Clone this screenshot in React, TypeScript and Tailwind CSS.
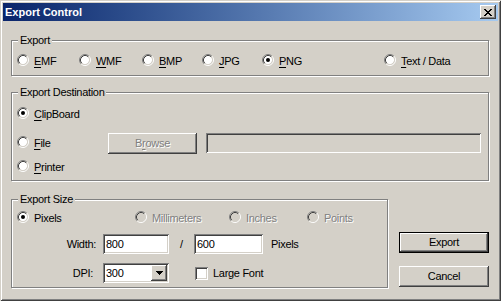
import clsx from 'clsx';
import type { ReactNode } from 'react';

const raised = 'shadow-[inset_-1px_-1px_0_#404040,inset_1px_1px_0_#fff,inset_-2px_-2px_0_#808080]';
const sunken =
  'shadow-[inset_1px_1px_0_#808080,inset_-1px_-1px_0_#fff,inset_2px_2px_0_#404040,inset_-2px_-2px_0_#d4d0c8]';
const grayText = 'text-[#808080] [text-shadow:1px_1px_0_#fff]';

function Key({ children }: { children: ReactNode }) {
  return <span className="underline underline-offset-[2px]">{children}</span>;
}

function Radio({ checked, disabled }: { checked?: boolean; disabled?: boolean }) {
  return (
    <svg width="12" height="12" viewBox="0 0 12 12" className="block shrink-0">
      <circle cx="6" cy="6" r="4.2" fill={disabled ? '#d4d0c8' : '#fff'} />
      <path d="M2.11 9.89A5.5 5.5 0 0 1 9.89 2.11" stroke="#808080" fill="none" />
      <path d="M9.89 2.11A5.5 5.5 0 0 1 2.11 9.89" stroke="#fff" fill="none" />
      <path d="M2.82 9.18A4.5 4.5 0 0 1 9.18 2.82" stroke="#404040" fill="none" />
      <path d="M9.18 2.82A4.5 4.5 0 0 1 2.82 9.18" stroke="#d4d0c8" fill="none" />
      {checked && <circle cx="6" cy="6" r="2" fill="#000" />}
    </svg>
  );
}

function RadioItem({
  label,
  checked,
  disabled,
  className,
}: {
  label: ReactNode;
  checked?: boolean;
  disabled?: boolean;
  className?: string;
}) {
  return (
    <div className={clsx('flex items-start', className)}>
      <Radio checked={checked} disabled={disabled} />
      <span className={clsx('ml-[5px] mt-[1px] whitespace-nowrap', disabled && grayText)}>{label}</span>
    </div>
  );
}

function Group({ title, className, children }: { title: string; className: string; children: ReactNode }) {
  return (
    <div
      className={clsx(
        'relative border border-[#808080] shadow-[inset_1px_1px_0_#fff,1px_1px_0_#fff]',
        className,
      )}
    >
      {/* caption sits over the etched line */}
      <span className="absolute left-[6px] top-[-7px] bg-[#d4d0c8] px-[2px] whitespace-nowrap">{title}</span>
      {children}
    </div>
  );
}

export default function App() {
  return (
    <div
      className={clsx(
        "flex h-[301px] w-[501px] flex-col bg-[#d4d0c8] p-[3px] font-['Liberation_Sans',Arial,sans-serif] text-[11px] leading-[13px] tracking-[-0.3px] text-black",
        'shadow-[inset_1px_1px_0_#d4d0c8,inset_-1px_-1px_0_#404040,inset_2px_2px_0_#fff,inset_-2px_-2px_0_#808080]',
      )}
    >
      {/* Title bar */}
      <div className="flex h-[18px] shrink-0 items-center justify-between bg-gradient-to-r from-[#0a246a] to-[#a6caf0] pl-[2px] pr-[2px]">
        <span className="font-bold tracking-normal text-white">Export Control</span>
        <button className={clsx('flex h-[14px] w-[16px] items-center justify-center bg-[#d4d0c8]', raised)}>
          <svg width="8" height="7" viewBox="0 0 8 7" shapeRendering="crispEdges" className="block">
            <path
              d="M0 0h2v1H0zM6 0h2v1H6zM1 1h2v1H1zM5 1h2v1H5zM2 2h4v1H2zM3 3h2v1H3zM2 4h4v1H2zM1 5h2v1H1zM5 5h2v1H5zM0 6h2v1H0zM6 6h2v1H6z"
              fill="#000"
            />
          </svg>
        </button>
      </div>

      <div className="flex flex-col pl-[8px]">
        {/* Export */}
        <Group title="Export" className="mt-[19px] flex h-[36px] w-[478px] pl-[5px] pt-[13px]">
          <RadioItem className="w-[62px]" label={<><Key>E</Key>MF</>} />
          <RadioItem className="w-[63px]" label={<><Key>W</Key>MF</>} />
          <RadioItem className="w-[60px]" label={<><Key>B</Key>MP</>} />
          <RadioItem className="w-[60px]" label={<><Key>J</Key>PG</>} />
          <RadioItem className="w-[122px]" checked label={<><Key>P</Key>NG</>} />
          <RadioItem label={<><Key>T</Key>ext / Data</>} />
        </Group>

        {/* Export Destination */}
        <Group title="Export Destination" className="mt-[16px] flex h-[89px] w-[478px] flex-col pl-[5px] pt-[14px]">
          <RadioItem checked label={<><Key>C</Key>lipBoard</>} />
          <div className="mt-[12px] flex h-[21px] items-start">
            <RadioItem className="mt-[3px] w-[91px]" label={<><Key>F</Key>ile</>} />
            <button className={clsx('flex h-[21px] w-[89px] items-center justify-center bg-[#d4d0c8]', raised, grayText)}>
              B<span className="underline underline-offset-[2px]">r</span>owse
            </button>
            <div className={clsx('ml-[9px] h-[20px] w-[275px] bg-[#d4d0c8]', sunken)} />
          </div>
          <RadioItem className="mt-[6px]" label={<><Key>P</Key>rinter</>} />
        </Group>

        <div className="mt-[18px] flex items-start">
          {/* Export Size */}
          <Group title="Export Size" className="flex h-[89px] w-[377px] flex-col pl-[5px] pt-[11px]">
            <div className="flex items-start">
              <RadioItem className="w-[118px]" checked label="Pixels" />
              <RadioItem className="w-[94px]" disabled label="Millimeters" />
              <RadioItem className="w-[78px]" disabled label="Inches" />
              <RadioItem disabled label="Points" />
            </div>
            <div className="mt-[9px] flex h-[20px] items-center">
              <span className="w-[79px] text-right">Width:</span>
              <div className={clsx('ml-[7px] flex h-[20px] w-[66px] items-center bg-white pl-[3px]', sunken)}>800</div>
              <span className="w-[25px] text-center">/</span>
              <div className={clsx('flex h-[20px] w-[69px] items-center bg-white pl-[3px]', sunken)}>600</div>
              <span className="ml-[8px]">Pixels</span>
            </div>
            <div className="mt-[9px] flex h-[20px] items-center">
              <span className="w-[76px] text-right">DPI:</span>
              <div
                className={clsx(
                  'ml-[10px] flex h-[20px] w-[66px] items-center justify-between bg-white pl-[3px] pr-[2px]',
                  sunken,
                )}
              >
                <span>300</span>
                <div className={clsx('flex h-[16px] w-[16px] items-center justify-center bg-[#d4d0c8]', raised)}>
                  <svg width="7" height="4" viewBox="0 0 7 4" shapeRendering="crispEdges" className="block">
                    <path d="M0 0h7v1H0zM1 1h5v1H1zM2 2h3v1H2zM3 3h1v1H3z" fill="#000" />
                  </svg>
                </div>
              </div>
              <div className={clsx('ml-[26px] h-[13px] w-[13px] bg-white', sunken)} />
              <span className="ml-[5px]">Large Font</span>
            </div>
          </Group>

          {/* Buttons */}
          <div className="ml-[11px] mt-[33px] flex flex-col">
            <button
              className={clsx(
                'flex h-[21px] w-[90px] items-center justify-center border border-black bg-[#d4d0c8]',
                raised,
              )}
            >
              Export
            </button>
            <button className={clsx('mt-[13px] flex h-[21px] w-[90px] items-center justify-center bg-[#d4d0c8]', raised)}>
              Cancel
            </button>
          </div>
        </div>
      </div>
    </div>
  );
}
